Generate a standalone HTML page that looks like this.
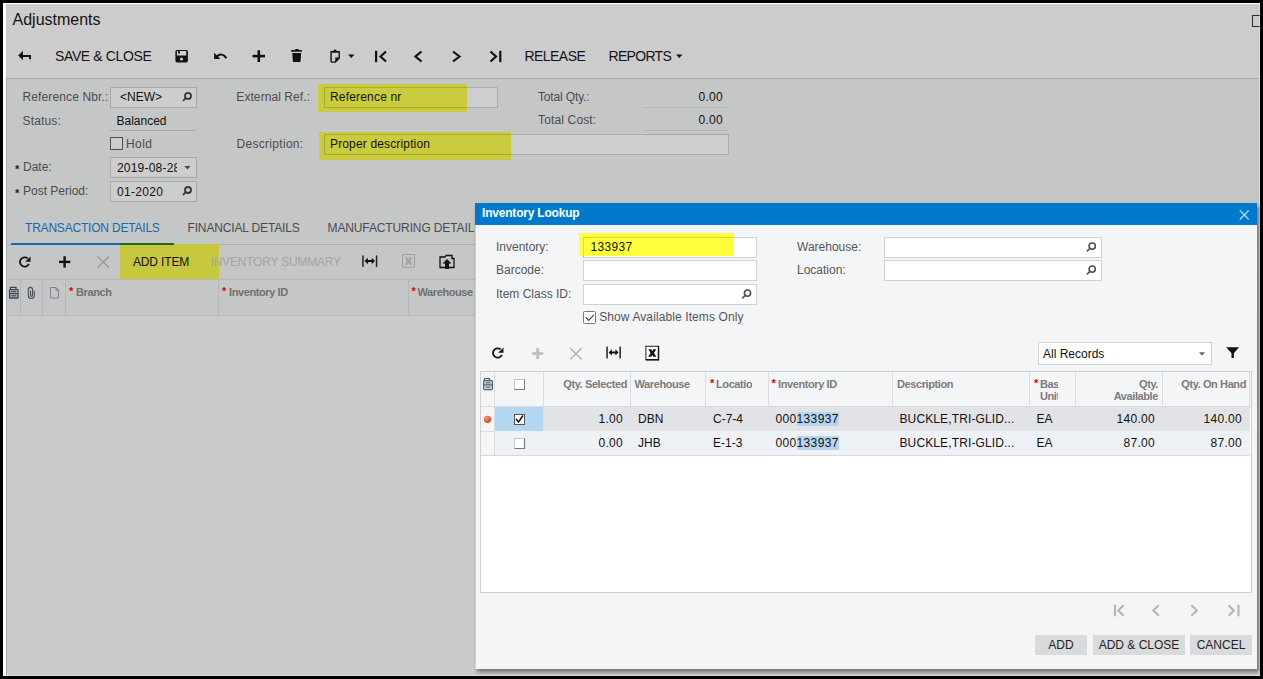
<!DOCTYPE html>
<html><head><meta charset="utf-8">
<style>
*{box-sizing:border-box;margin:0;padding:0}
html,body{width:1263px;height:679px;overflow:hidden;background:#000}
body{position:relative;font-family:"Liberation Sans",sans-serif}
.a{position:absolute}
.t{position:absolute;white-space:nowrap;line-height:20px;font-size:12px}
.hb{position:absolute;height:1px}
.vb{position:absolute;width:1px}
.box{position:absolute;border:1px solid #a8a9aa;background:#cdcdcd}
.lbl{color:#4b4b4d}
.gh{font-weight:bold;font-size:11px;color:#707070;letter-spacing:-0.4px}
.rq{color:#e00000}
.mbox{position:absolute;border:1px solid #d2d2d2;background:#fff}
.btn{position:absolute;background:#d9dadc;height:20px;top:635px;line-height:20px;font-size:12px;color:#222;text-align:center}
svg{position:absolute;overflow:visible}
</style></head><body>
<!-- frame -->
<div class="a" style="left:3px;top:3px;width:1257px;height:673px;background:#fff"></div>
<div class="a" id="page" style="left:6px;top:4px;width:1253px;height:671px;background:#cbcbcb;overflow:hidden">
</div>
<!-- header area -->
<div class="a" style="left:6px;top:4px;width:1253px;height:74px;background:#cccccc"></div>
<div class="t" style="left:12.5px;top:10px;font-size:16px;color:#141414">Adjustments</div>
<div class="vb" style="left:1259px;top:4px;height:671px;background:#dedede"></div>
<div class="hb" style="left:6px;top:675px;width:1254px;background:#dcdcdc"></div>
<!-- top-right icon -->
<div class="a" style="left:1252px;top:15px;width:8px;height:12px;border:1.5px solid #2a2a2a;border-right:none;border-radius:1px"></div>

<!-- toolbar -->
<svg style="left:0;top:0" width="1263" height="80" viewBox="0 0 1263 80">
 <!-- back arrow -->
 <path d="M18.2 55.6 L22.9 50.8 V54.9 H31 V59.2 H29.1 V56.9 H22.9 V60.3 Z" fill="#111"/>
 <!-- save -->
 <rect x="175.4" y="49.9" width="12.5" height="12.5" rx="1.6" fill="#111"/>
 <rect x="176.9" y="51" width="9.3" height="4.5" fill="#d2d2d2"/>
 <rect x="178.1" y="51" width="1.7" height="2.7" fill="#111"/>
 <circle cx="181.5" cy="59" r="1.5" fill="#d2d2d2"/>
 <!-- undo -->
 <path d="M214.1 52.8 V59.1 H220.4 Z" fill="#111"/>
 <path d="M216.8 56.6 C219.5 53.6 224 53.8 226.3 58.2" fill="none" stroke="#111" stroke-width="2"/>
 <!-- plus -->
 <rect x="252.5" y="54.8" width="12.5" height="2.6" fill="#111"/>
 <rect x="257.5" y="50.2" width="2.6" height="11.8" fill="#111"/>
 <!-- trash -->
 <rect x="291.2" y="50" width="10.7" height="1.7" fill="#111"/>
 <rect x="295.3" y="49" width="3.4" height="1.5" rx="0.6" fill="#111"/>
 <path d="M292.3 53.1 h8.8 l-0.5 8.2 q-0.1 0.6 -0.7 0.6 h-6.4 q-0.6 0 -0.7 -0.6 z" fill="#111"/>
 <!-- clipboard -->
 <path d="M331.1 51.8 H339.2 V57.9 L335.3 62.1 H332 Q331.1 62.1 331.1 61.2 Z" fill="none" stroke="#111" stroke-width="1.4"/>
 <path d="M332.2 52.6 L334.3 49.4 H335.8 L337.9 52.6 Z" fill="#111"/>
 <path d="M339.6 57.6 H335.3 V62.4 Z" fill="#111"/>
 <path d="M348 54.6 h6.5 l-3.25 3.3 z" fill="#111"/>
 <!-- first -->
 <rect x="375" y="50.8" width="2.2" height="11.4" fill="#111"/>
 <path d="M386 51.5 L380.5 56.5 L386 61.5" fill="none" stroke="#111" stroke-width="2.2"/>
 <!-- prev -->
 <path d="M421.5 51.5 L415.5 56.5 L421.5 61.5" fill="none" stroke="#111" stroke-width="2.2"/>
 <!-- next -->
 <path d="M453 51.5 L459.5 56.5 L453 61.5" fill="none" stroke="#111" stroke-width="2.2"/>
 <!-- last -->
 <path d="M490.5 51.5 L496 56.5 L490.5 61.5" fill="none" stroke="#111" stroke-width="2.2"/>
 <rect x="499.2" y="50.8" width="2.2" height="11.4" fill="#111"/>
 <!-- reports caret -->
 <path d="M676 54.5 h6.5 l-3.25 3.5 z" fill="#111"/>
</svg>
<div class="t" style="left:55px;top:46px;font-size:14px;color:#141414;letter-spacing:-0.37px">SAVE &amp; CLOSE</div>
<div class="t" style="left:524.5px;top:46px;font-size:14px;color:#141414;letter-spacing:-0.55px">RELEASE</div>
<div class="t" style="left:608.5px;top:46px;font-size:14px;color:#141414;letter-spacing:-0.7px">REPORTS</div>

<!-- form area -->
<div class="a" style="left:6px;top:78px;width:1253px;height:597px;background:#c5c7c6"></div>
<div class="a" style="left:6px;top:316px;width:1253px;height:359px;background:#cbcbcb"></div>
<div class="hb" style="left:6px;top:78px;width:1253px;background:#ababab"></div>
<div class="vb" style="left:6px;top:78px;height:597px;background:#a9aaab"></div>

<div class="t lbl" style="left:22.5px;top:87px;letter-spacing:0.12px">Reference Nbr.:</div>
<div class="box" style="left:110px;top:87px;width:87px;height:21px"></div>
<div class="t" style="left:120px;top:87px;color:#111">&lt;NEW&gt;</div>
<div class="t lbl" style="left:22.5px;top:111px;letter-spacing:0.15px">Status:</div>
<div class="t" style="left:116.5px;top:111px;color:#111">Balanced</div>
<div class="hb" style="left:110px;top:130px;width:86px;background:#a9a9a9"></div>
<div class="a" style="left:110px;top:137px;width:13px;height:13px;border:1px solid #505050;background:#cdcdcd"></div>
<div class="t lbl" style="left:126px;top:134px;letter-spacing:0.4px">Hold</div>
<div class="t" style="left:15px;top:159px;font-size:11px;color:#222;font-weight:bold">*</div>
<div class="t lbl" style="left:23px;top:157px">Date:</div>
<div class="box" style="left:110px;top:157px;width:87px;height:21px;overflow:hidden"></div>
<div class="a" style="left:116px;top:158px;width:61px;height:18px;overflow:hidden"><div class="t" style="left:1px;top:0;color:#111;letter-spacing:0.2px">2019-08-28</div></div>
<div class="t" style="left:15px;top:183px;font-size:11px;color:#222;font-weight:bold">*</div>
<div class="t lbl" style="left:23px;top:181px">Post Period:</div>
<div class="box" style="left:110px;top:181px;width:87px;height:21px"></div>
<div class="t" style="left:117px;top:182px;color:#111;letter-spacing:0.3px">01-2020</div>

<div class="t lbl" style="left:236.3px;top:87px;letter-spacing:0.08px">External Ref.:</div>
<div class="a" style="left:324px;top:87px;width:174px;height:21px;background:#cdcecf"></div>
<div class="a" style="left:318px;top:84px;width:149px;height:28px;background:#cbcb3e"></div>
<div class="a" style="left:324px;top:87px;width:174px;height:21px;border:1px solid rgba(40,40,0,0.2)"></div>
<div class="t" style="left:330px;top:87px;color:#111;letter-spacing:0.18px">Reference nr</div>
<div class="t lbl" style="left:236.5px;top:134px;letter-spacing:0.3px">Description:</div>
<div class="a" style="left:324px;top:134px;width:405px;height:21px;background:#cdcecf"></div>
<div class="a" style="left:318.5px;top:132px;width:192px;height:27.5px;background:#cbcb3e"></div>
<div class="a" style="left:324px;top:134px;width:405px;height:21px;border:1px solid rgba(40,40,0,0.2)"></div>
<div class="t" style="left:330px;top:134px;color:#111;letter-spacing:0.15px">Proper description</div>

<div class="t lbl" style="left:538px;top:87px;letter-spacing:-0.15px">Total Qty.:</div>
<div class="t" style="left:600px;top:87px;width:123px;text-align:right;color:#111;letter-spacing:0.3px">0.00</div>
<div class="hb" style="left:643px;top:107px;width:85px;border-top:1px dotted #a9a9a9"></div>
<div class="t lbl" style="left:538px;top:110px;letter-spacing:0.15px">Total Cost:</div>
<div class="t" style="left:600px;top:110px;width:123px;text-align:right;color:#111;letter-spacing:0.3px">0.00</div>
<div class="hb" style="left:643px;top:130px;width:85px;border-top:1px dotted #a9a9a9"></div>

<!-- tabs -->
<div class="t" style="left:25px;top:218px;color:#1668b0;letter-spacing:-0.2px">TRANSACTION DETAILS</div>
<div class="t lbl" style="left:187.5px;top:218px;letter-spacing:-0.15px">FINANCIAL DETAILS</div>
<div class="t lbl" style="left:327.5px;top:218px;letter-spacing:-0.12px">MANUFACTURING DETAILS</div>
<div class="hb" style="left:6px;top:244px;width:1253px;background:#adaeb0"></div>
<div class="a" style="left:11px;top:243px;width:163px;height:2px;background:#1668b0"></div>
<div class="a" style="left:120px;top:243.5px;width:99px;height:35px;background:#c8c83e"></div>
<div class="a" style="left:120px;top:243px;width:54px;height:2px;background:#1a6a30"></div>
<div class="t" style="left:133px;top:252px;color:#111;letter-spacing:-0.15px">ADD ITEM</div>
<div class="t" style="left:210.5px;top:252px;color:#a3a3a3;letter-spacing:-0.2px">INVENTORY SUMMARY</div>
<div class="hb" style="left:6px;top:279px;width:1253px;background:#b5b6b8"></div>
<div class="hb" style="left:6px;top:315px;width:1253px;background:#b5b6b8"></div>
<div class="vb" style="left:20px;top:280px;height:35px;background:#b5b6b8"></div>
<div class="vb" style="left:42px;top:280px;height:35px;background:#b5b6b8"></div>
<div class="vb" style="left:65px;top:280px;height:35px;background:#b5b6b8"></div>
<div class="vb" style="left:218px;top:280px;height:35px;background:#b5b6b8"></div>
<div class="vb" style="left:408px;top:280px;height:35px;background:#b5b6b8"></div>
<div class="t gh rq" style="left:69px;top:281px">*</div>
<div class="t gh" style="left:76px;top:282px">Branch</div>
<div class="t gh rq" style="left:222px;top:281px">*</div>
<div class="t gh" style="left:229px;top:282px">Inventory ID</div>
<div class="t gh rq" style="left:411.5px;top:281px">*</div>
<div class="t gh" style="left:417.5px;top:282px">Warehouse</div>

<svg style="left:0;top:240px" width="480" height="80" viewBox="0 240 480 80">
 <!-- refresh -->
 <path d="M28.96 263.99 A4.7 4.7 0 1 1 27.72 258.4" fill="none" stroke="#111" stroke-width="1.8"/>
 <path d="M30.5 256.5 V261.8 H25.2 Z" fill="#111"/>
 <!-- plus -->
 <rect x="59" y="260.7" width="11.3" height="2.4" fill="#111"/>
 <rect x="63.4" y="256.3" width="2.4" height="11.3" fill="#111"/>
 <!-- x -->
 <path d="M97.5 256.5 L109 267.5 M109 256.5 L97.5 267.5" stroke="#9a9a9a" stroke-width="1.5"/>
 <!-- fit -->
 <rect x="362.2" y="255.4" width="1.5" height="11.5" fill="#222"/>
 <rect x="375.8" y="255.4" width="1.5" height="11.5" fill="#222"/>
 <path d="M364.5 261 L367.8 257.8 V260 H371.7 V257.8 L375 261 L371.7 264.2 V262 H367.8 V264.2 Z" fill="#111"/>
 <!-- excel disabled -->
 <rect x="402.5" y="254.5" width="12" height="12.8" fill="none" stroke="#a0a0a0" stroke-width="1"/>
 <path d="M404.6 257.3 H407.6 L408.5 259.2 L409.4 257.3 H412.4 L410.2 261 L412.5 264.8 H409.4 L408.5 262.8 L407.6 264.8 H404.5 L406.8 261 Z" fill="#a5a5a5"/>
 <!-- upload -->
 <path d="M440 257 h5 l1 -1.5 h6 v3 h2 v9 h-14 z" fill="none" stroke="#111" stroke-width="1.3"/>
 <path d="M447 259 L451.5 263.5 H449 V269 H445 V263.5 H442.5 Z" fill="#111"/>
 <!-- grid header icons -->
 <path d="M10.5 289.5 v-2.2 h5.5 v2.2" fill="none" stroke="#3f4650" stroke-width="1.3"/>
 <rect x="9.6" y="289.6" width="8.4" height="4" rx="0.6" fill="#b9bcc0" stroke="#3f4650" stroke-width="1.3"/>
 <rect x="9.6" y="293.6" width="8.4" height="4.4" rx="0.6" fill="#b9bcc0" stroke="#3f4650" stroke-width="1.3"/>
 <rect x="11.3" y="291" width="5" height="1.2" fill="#3f4650"/>
 <rect x="11.3" y="295.2" width="5" height="1.2" fill="#3f4650"/>
 <path d="M34.3 290.5 v5 a3 3 0 0 1 -6 0 v-6 a2.1 2.1 0 0 1 4.2 0 v5.7 a1 1 0 0 1 -2 0 v-4.7" fill="none" stroke="#4a4f57" stroke-width="1.1"/>
 <path d="M50.5 287.5 h5.5 l2.5 2.5 v8 h-8 z" fill="#c3c5c8" stroke="#7d8288" stroke-width="1"/>
 <path d="M56 287.5 v2.5 h2.5" fill="none" stroke="#7d8288" stroke-width="1"/>
</svg>

<!-- modal shadow + modal -->
<div class="a" style="left:475px;top:203px;width:782px;height:466px;box-shadow:2px 3px 4px rgba(0,0,0,0.45);background:#f4f5f7"></div>
<div class="a" style="left:475px;top:203px;width:782px;height:22px;background:#0078cc"></div>
<div class="t" style="left:482px;top:203px;font-weight:bold;color:#fff;letter-spacing:-0.2px">Inventory Lookup</div>
<svg style="left:0;top:0" width="1263" height="240" viewBox="0 0 1263 240">
 <path d="M1239.8 210.2 L1248.8 219.6 M1248.8 210.2 L1239.8 219.6" stroke="#a8d4f5" stroke-width="1.4"/>
</svg>
<div class="vb" style="left:475px;top:225px;height:444px;background:#d0d0d0"></div>

<div class="t lbl" style="left:496px;top:237px;color:#555">Inventory:</div>
<div class="mbox" style="left:583px;top:237px;width:174px;height:21px"></div>
<div class="a" style="left:579px;top:233px;width:155px;height:23px;background:#ffff3c"></div>
<div class="a" style="left:583px;top:237px;width:151px;height:21px;border:1px solid rgba(0,0,0,0.13);border-right:none;border-bottom:none"></div>
<div class="t" style="left:590.5px;top:237px;color:#111;letter-spacing:0.33px">133937</div>
<div class="t lbl" style="left:496px;top:260px;color:#555">Barcode:</div>
<div class="mbox" style="left:583px;top:260px;width:174px;height:21px"></div>
<div class="t lbl" style="left:496px;top:284px;color:#555">Item Class ID:</div>
<div class="mbox" style="left:583px;top:284px;width:174px;height:21px"></div>
<div class="a" style="left:583px;top:310.5px;width:13px;height:13px;border:1.3px solid #7a7a7a;border-radius:1.5px;background:#fff"></div>
<svg style="left:0;top:0" width="1263" height="679" viewBox="0 0 1263 679">
 <path d="M585.7 317.2 L588.6 320.4 L593.9 314.8" fill="none" stroke="#444" stroke-width="1.2"/>
</svg>
<div class="t lbl" style="left:599.2px;top:307px;color:#555;letter-spacing:0.1px">Show Available Items Only</div>

<div class="t lbl" style="left:797px;top:237px;color:#555">Warehouse:</div>
<div class="mbox" style="left:884px;top:237px;width:218px;height:21px"></div>
<div class="t lbl" style="left:797px;top:260px;color:#555">Location:</div>
<div class="mbox" style="left:884px;top:260px;width:218px;height:21px"></div>

<!-- modal grid toolbar -->
<div class="mbox" style="left:1038px;top:342px;width:174px;height:23px"></div>
<div class="t" style="left:1043px;top:344px;color:#111">All Records</div>

<!-- grid -->
<div class="a" style="left:480px;top:371px;width:772px;height:222px;border:1px solid #cfd0d2;background:#fff"></div>
<div class="a" style="left:481px;top:372px;width:770px;height:34px;background:#f4f5f7"></div>
<div class="hb" style="left:481px;top:406px;width:770px;background:#d8d9db"></div>
<div class="a" style="left:481px;top:407px;width:769px;height:24px;background:#e1e3e7"></div>
<div class="a" style="left:495px;top:407px;width:48px;height:24px;background:#b3d7f1"></div>
<div class="a" style="left:481px;top:431px;width:769px;height:24px;background:#eef2f7"></div>
<div class="hb" style="left:481px;top:455px;width:769px;background:#d8d9db"></div>
<div class="a" style="left:481px;top:407px;width:13px;height:48px;background:#f4f5f7"></div>
<div class="hb" style="left:481px;top:431px;width:13px;background:#dcdde0"></div>

<div class="vb" style="left:494px;top:372px;height:83px;background:#dcdde0"></div>
<div class="vb" style="left:543px;top:372px;height:34px;background:#dcdde0"></div>
<div class="vb" style="left:630px;top:372px;height:34px;background:#dcdde0"></div>
<div class="vb" style="left:705px;top:372px;height:34px;background:#dcdde0"></div>
<div class="vb" style="left:768px;top:372px;height:34px;background:#dcdde0"></div>
<div class="vb" style="left:892px;top:372px;height:34px;background:#dcdde0"></div>
<div class="vb" style="left:1029px;top:372px;height:34px;background:#dcdde0"></div>
<div class="vb" style="left:1075px;top:372px;height:34px;background:#dcdde0"></div>
<div class="vb" style="left:1162px;top:372px;height:34px;background:#dcdde0"></div>
<div class="vb" style="left:1249px;top:372px;height:34px;background:#dcdde0"></div>
<div class="a" style="left:514px;top:379px;width:11px;height:11px;border:1px solid #c8c8c8;border-right-color:#7a7a7a;border-bottom-color:#7a7a7a;background:#fff"></div>
<div class="t gh" style="left:543px;top:374px;width:84px;text-align:right;color:#7b7b7b">Qty. Selected</div>
<div class="t gh" style="left:634.5px;top:374px;color:#7b7b7b">Warehouse</div>
<div class="t gh rq" style="left:710px;top:373px">*</div>
<div class="a" style="left:716px;top:372px;width:36px;height:34px;overflow:hidden"><div class="t gh" style="left:0;top:2px;color:#7b7b7b">Location</div></div>
<div class="t gh rq" style="left:771.5px;top:373px">*</div>
<div class="t gh" style="left:778px;top:374px;color:#7b7b7b">Inventory ID</div>
<div class="t gh" style="left:897px;top:374px;color:#7b7b7b">Description</div>
<div class="t gh rq" style="left:1034px;top:373px">*</div>
<div class="a" style="left:1040px;top:372px;width:18px;height:34px;overflow:hidden"><div class="t gh" style="left:0;top:2px;color:#7b7b7b">Base</div><div class="t gh" style="left:0;top:14px;color:#7b7b7b">Unit</div></div>
<div class="t gh" style="left:1075px;top:374px;width:83px;text-align:right;color:#7b7b7b">Qty.</div>
<div class="t gh" style="left:1075px;top:386px;width:83px;text-align:right;color:#7b7b7b">Available</div>
<div class="t gh" style="left:1162px;top:374px;width:84px;text-align:right;color:#7b7b7b">Qty. On Hand</div>

<svg style="left:0;top:0" width="1263" height="679" viewBox="0 0 1263 679">
 <defs><radialGradient id="rd" cx="0.4" cy="0.35" r="0.7"><stop offset="0" stop-color="#f0a080"/><stop offset="1" stop-color="#c8401e"/></radialGradient></defs>
 <circle cx="487.5" cy="419.3" r="3.6" fill="url(#rd)"/>
 <!-- grid header settings icon -->
 <path d="M484.5 380.5 v-2 h5 v2" fill="none" stroke="#4d5d73" stroke-width="1.2"/>
 <rect x="483.6" y="380.6" width="8.8" height="4.4" rx="0.8" fill="#dfe3e8" stroke="#4d5d73" stroke-width="1.2"/>
 <rect x="483.6" y="385" width="8.8" height="4.6" rx="0.8" fill="#dfe3e8" stroke="#4d5d73" stroke-width="1.2"/>
 <rect x="485.5" y="382.2" width="5" height="1.2" fill="#4d5d73"/>
 <rect x="485.5" y="386.6" width="5" height="1.2" fill="#4d5d73"/>
 <!-- modal toolbar icons -->
 <path d="M501.96 354.99 A4.7 4.7 0 1 1 500.72 349.4" fill="none" stroke="#111" stroke-width="1.8"/>
 <path d="M503.5 347.5 V352.8 H498.2 Z" fill="#111"/>
 <rect x="532.2" y="352.1" width="11" height="2.8" fill="#bdbdbd"/>
 <rect x="536.3" y="348" width="2.8" height="11" fill="#bdbdbd"/>
 <path d="M570.3 348.3 L581.5 359.2 M581.5 348.3 L570.3 359.2" stroke="#b0b0b0" stroke-width="1.5"/>
 <rect x="606.3" y="346.6" width="1.5" height="11.8" fill="#222"/>
 <rect x="619.4" y="346.6" width="1.5" height="11.8" fill="#222"/>
 <path d="M608.6 352.4 L611.8 349.2 V351.4 H615.4 V349.2 L618.6 352.4 L615.4 355.6 V353.4 H611.8 V355.6 Z" fill="#111"/>
 <rect x="645.9" y="346.3" width="12.6" height="13.4" fill="#fff" stroke="#333" stroke-width="1.1"/>
 <path d="M658.5 346.3 V359.7 H645.9" fill="none" stroke="#111" stroke-width="1.4"/>
 <path d="M648.3 349.3 H651.3 L652.3 351.2 L653.3 349.3 H656.3 L654 353 L656.4 356.8 H653.3 L652.3 354.8 L651.3 356.8 H648.2 L650.6 353 Z" fill="#111"/>
 <!-- filter -->
 <path d="M1226.2 347.3 H1239 L1233.9 353.2 V358 H1231.5 V353.2 Z" fill="#111"/>
 <!-- dropdown caret -->
 <path d="M1199 352.3 h6 l-3 3.5 z" fill="#666"/>
 <!-- search icons -->
 <g fill="none" stroke="#505050" stroke-width="1.6">
  <circle cx="747.5" cy="293.1" r="3.1"/><path d="M745.3 295.3 L742.2 298.4"/>
  <circle cx="1092.2" cy="246.1" r="3.1"/><path d="M1090 248.3 L1086.9 251.4"/>
  <circle cx="1092.2" cy="269.1" r="3.1"/><path d="M1090 271.3 L1086.9 274.4"/>
 </g>
 <g fill="none" stroke="#383838" stroke-width="1.8">
  <circle cx="188" cy="95.9" r="3"/><path d="M185.8 98.1 L183 100.9"/>
  <circle cx="188" cy="190" r="3"/><path d="M185.8 192.2 L183 195"/>
 </g>
 <path d="M184.4 165.9 h6 l-3 3.5 z" fill="#4a4a4a"/>
 <!-- checkboxes rows -->
 <rect x="514.5" y="414.5" width="10" height="10" fill="#fff" stroke="#555" stroke-width="1"/>
 <path d="M516 419 L518.5 422 L523 415.5" fill="none" stroke="#111" stroke-width="1.5"/>
 <rect x="514.5" y="438.5" width="10" height="10" fill="#fff" stroke="#c8c8c8" stroke-width="1"/><path d="M524.5 438.5 V448.5 H514.5" fill="none" stroke="#7a7a7a" stroke-width="1.2"/>
 <!-- pager -->
 <g fill="none" stroke="#b3b5b8" stroke-width="2.1">
  <path d="M1115 604.8 V616.2 M1123.6 605.3 L1118.4 610.5 L1123.6 615.7"/>
  <path d="M1158.8 605.3 L1153.4 610.5 L1158.8 615.7"/>
  <path d="M1191.4 605.3 L1196.8 610.5 L1191.4 615.7"/>
  <path d="M1228.6 605.3 L1233.8 610.5 L1228.6 615.7 M1238.5 604.8 V616.2"/>
 </g>
</svg>
<div class="a" style="left:797px;top:411.5px;width:42px;height:14px;background:#b5d5f0"></div>
<div class="a" style="left:797px;top:435.5px;width:42px;height:14px;background:#b5d5f0"></div>
<div class="t" style="left:543px;top:409px;width:80px;text-align:right;color:#111;letter-spacing:0.3px">1.00</div>
<div class="t" style="left:638px;top:409px;color:#111">DBN</div>
<div class="t" style="left:713px;top:409px;color:#111">C-7-4</div>
<div class="t" style="left:775.5px;top:409px;color:#111;letter-spacing:0.35px">000133937</div>
<div class="t" style="left:899.5px;top:409px;color:#111;letter-spacing:0.12px">BUCKLE,TRI-GLID...</div>
<div class="t" style="left:1036.5px;top:409px;color:#111">EA</div>
<div class="t" style="left:1075px;top:409px;width:80px;text-align:right;color:#111;letter-spacing:0.3px">140.00</div>
<div class="t" style="left:1162px;top:409px;width:80px;text-align:right;color:#111;letter-spacing:0.3px">140.00</div>
<div class="t" style="left:543px;top:433px;width:80px;text-align:right;color:#111;letter-spacing:0.3px">0.00</div>
<div class="t" style="left:638px;top:433px;color:#111">JHB</div>
<div class="t" style="left:713px;top:433px;color:#111">E-1-3</div>
<div class="t" style="left:775.5px;top:433px;color:#111;letter-spacing:0.35px">000133937</div>
<div class="t" style="left:899.5px;top:433px;color:#111;letter-spacing:0.12px">BUCKLE,TRI-GLID...</div>
<div class="t" style="left:1036.5px;top:433px;color:#111">EA</div>
<div class="t" style="left:1075px;top:433px;width:80px;text-align:right;color:#111;letter-spacing:0.3px">87.00</div>
<div class="t" style="left:1162px;top:433px;width:80px;text-align:right;color:#111;letter-spacing:0.3px">87.00</div>

<div class="btn" style="left:1035px;width:52px">ADD</div>
<div class="btn" style="left:1093px;width:92px">ADD &amp; CLOSE</div>
<div class="btn" style="left:1190px;width:62px">CANCEL</div>
</body></html>
